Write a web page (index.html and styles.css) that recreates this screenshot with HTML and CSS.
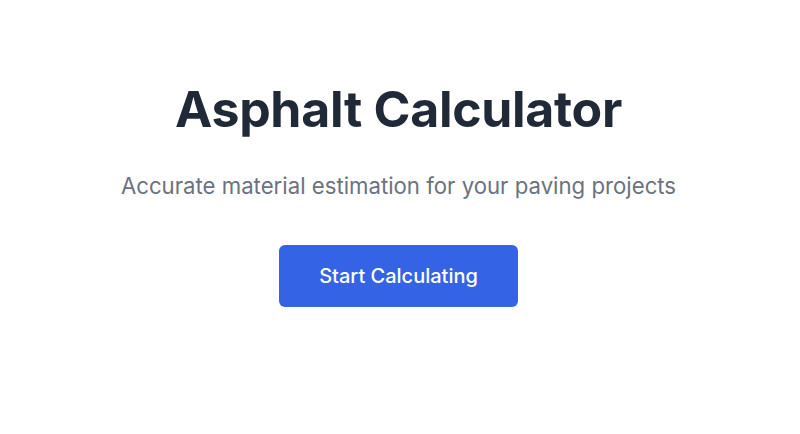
FILE: index.html
```html
<!DOCTYPE html>
<html lang="en">
<head>
<meta charset="utf-8">
<title>Asphalt Calculator</title>
<link rel="stylesheet" href="styles.css">
</head>
<body>
<main class="hero">
  <h1 class="title">Asphalt Calculator</h1>
  <p class="subtitle">Accurate material estimation for your paving projects</p>
  <button class="cta">Start Calculating</button>
</main>
</body>
</html>
```
FILE: styles.css
```css
html, body {
  margin: 0;
  padding: 0;
  background: #ffffff;
}
body {
  font-family: Inter, "Noto Sans", sans-serif;
  width: 800px;
  height: 434px;
  overflow: hidden;
}
.hero {
  display: flex;
  flex-direction: column;
  align-items: center;
  padding: 79px 3px 0 0;
}
.title {
  margin: 0;
  font-size: 50px;
  line-height: 60px;
  font-weight: 700;
  letter-spacing: -0.3px;
  color: #1f2937;
}
.subtitle {
  margin: 31px 0 0;
  font-size: 22.2px;
  line-height: 32px;
  color: #6b7280;
}
.cta {
  margin-top: 43px;
  width: 239px;
  height: 62px;
  padding: 0;
  border: none;
  border-radius: 6px;
  background: #3563e6;
  color: #ffffff;
  font-family: Inter, "Noto Sans", sans-serif;
  font-size: 20px;
  font-weight: 500;
}
```
